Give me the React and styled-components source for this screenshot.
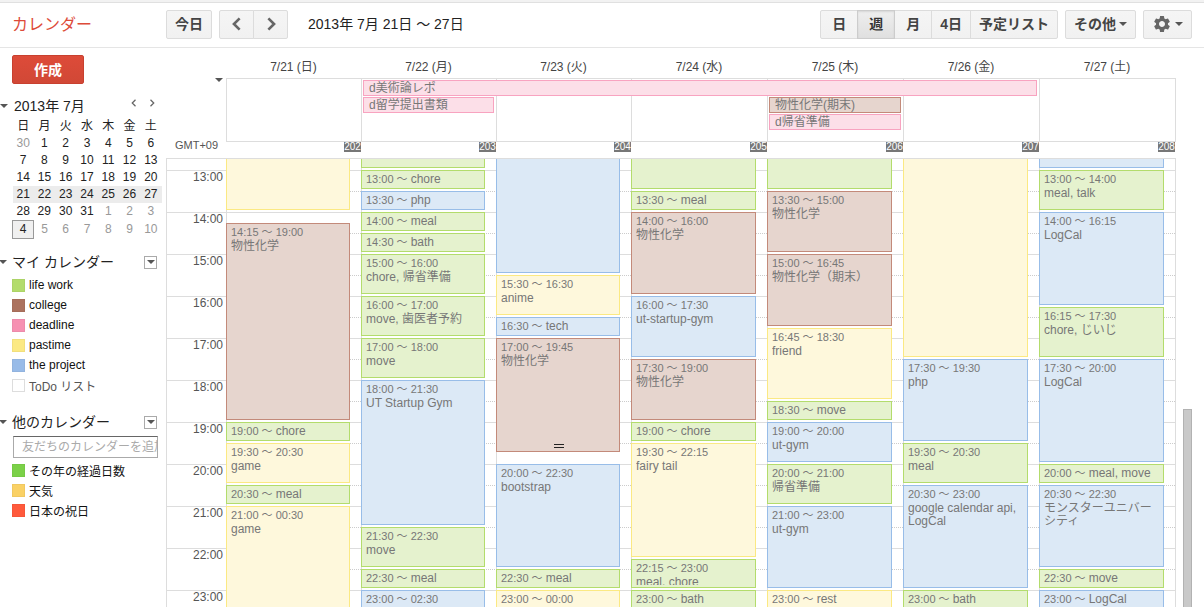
import React from "react";
import styled, { createGlobalStyle, css } from "styled-components";
import { MdSettings } from "react-icons/md";

const GlobalStyle = createGlobalStyle`
  *, *::before, *::after { box-sizing: border-box; }
  body {
    margin: 0;
    background: #fff;
    color: #222;
    font-family: "Liberation Sans", "Noto Sans CJK JP", sans-serif;
    font-size: 12px;
  }
  button, input { font-family: inherit; }
`;

const DAY_COLUMNS = "repeat(3, minmax(0, 135fr)) repeat(4, minmax(0, 136fr))";
const FIRST_HOUR = 12.75;
const HOURS = [13, 14, 15, 16, 17, 18, 19, 20, 21, 22, 23];

const palette = {
  green: { border: "#b3dc6c", fill: "#e5f2ce" },
  blue: { border: "#98bde8", fill: "#dce9f6" },
  yellow: { border: "#fbe983", fill: "#fef8dc" },
  brown: { border: "#c38a7a", fill: "#e6d5ce" },
  pink: { border: "#f8a3c0", fill: "#fcdfe8" },
};

const Page = styled.div`
  display: flex;
  flex-direction: column;
  height: 100vh;
  overflow: hidden;
`;

const TopStrip = styled.div`
  flex: none;
  height: 3px;
  background: #f2f2f2;
  border-bottom: 1px solid #e0e0e0;
`;

const Header = styled.header`
  flex: none;
  display: flex;
  align-items: center;
  height: 45px;
  padding: 0 12px 2px 0;
  border-bottom: 1px solid #e5e5e5;
`;

const Logo = styled.h1`
  width: 166px;
  margin: 0;
  padding: 2px 0 0 12px;
  color: #dd4b39;
  font-size: 16px;
  font-weight: 400;
  line-height: 24px;
`;

const ButtonGroup = styled.div`
  display: flex;
  margin-left: ${(p) => (p.$spaced ? "7px" : "0")};
`;

const HeaderRight = styled.div`
  display: flex;
  gap: 7px;
  margin-left: auto;
`;

const Button = styled.button`
  display: flex;
  align-items: center;
  justify-content: center;
  gap: 3px;
  height: 29px;
  min-width: ${(p) => (p.$narrow ? "35px" : "38px")};
  padding: 0 8px;
  border: 1px solid #dcdcdc;
  border-radius: 2px;
  background: linear-gradient(#f5f5f5, #f1f1f1);
  color: #444;
  font-size: 14px;
  font-weight: 700;
  line-height: 20px;
  white-space: nowrap;
  ${ButtonGroup} > &:not(:first-child) {
    margin-left: -1px;
    border-top-left-radius: 0;
    border-bottom-left-radius: 0;
  }
  ${ButtonGroup} > &:not(:last-child) {
    border-top-right-radius: 0;
    border-bottom-right-radius: 0;
  }
  ${(p) =>
    p.$selected &&
    css`
      z-index: 1;
      border-color: #ccc;
      background: linear-gradient(#eee, #e0e0e0);
      box-shadow: inset 0 1px 2px rgba(0, 0, 0, 0.1);
      color: #333;
    `}
`;

const DateRange = styled.h2`
  margin: 0 0 0 20px;
  font-size: 14px;
  font-weight: 400;
  line-height: 20px;
`;

const Caret = styled.span`
  flex: none;
  width: 0;
  height: 0;
  border: 4px solid transparent;
  border-top-color: #555;
  border-bottom: 0;
`;

const Content = styled.div`
  flex: 1;
  display: flex;
  min-height: 0;
`;

const Sidebar = styled.aside`
  flex: none;
  width: 166px;
  padding: 7px 4px 0 0;
`;

const CreateButton = styled.button`
  display: block;
  width: 72px;
  height: 29px;
  margin: 0 0 9px 12px;
  padding: 0;
  border: 1px solid #c8402f;
  border-radius: 2px;
  background: linear-gradient(#dd4b39, #d14836);
  color: #fff;
  font-size: 14px;
  font-weight: 700;
  line-height: 20px;
`;

const SectionHeader = styled.div`
  display: flex;
  align-items: center;
  height: ${(p) => (p.$month ? "25px" : "22px")};
  padding-right: ${(p) => (p.$month ? "1px" : "5px")};
`;

const Toggle = styled.button`
  display: flex;
  align-items: center;
  gap: ${(p) => (p.$month ? "6px" : "5px")};
  margin-left: ${(p) => (p.$month ? "0" : "-1px")};
  padding: 0;
  border: 0;
  background: none;
  color: #222;
  font-size: 14px;
  line-height: 20px;
`;

const MonthNav = styled.div`
  display: flex;
  margin-left: auto;
  padding-bottom: 5px;
`;

const IconButton = styled.button`
  display: flex;
  align-items: center;
  justify-content: center;
  width: 18px;
  height: 18px;
  padding: 0;
  border: 0;
  background: none;
`;

const MiniCalendar = styled.table`
  width: 150px;
  margin: 0 0 12px 12px;
  border-collapse: collapse;
  table-layout: fixed;
  text-align: center;
  line-height: 17px;
  th, td { padding: 0; font-weight: 400; }
`;

const MiniWeek = styled.tr`
  background: ${(p) => (p.$current ? "#ececec" : "none")};
`;

const MiniDay = styled.td`
  color: ${(p) => (p.$muted ? "#999" : "#222")};
  ${(p) =>
    p.$today &&
    css`
      border: 1px solid #999;
      background: #f0f0f0;
    `}
`;

const MenuButton = styled.button`
  display: flex;
  align-items: center;
  justify-content: center;
  width: 13px;
  height: 13px;
  margin-left: auto;
  padding: 0;
  border: 1px solid #aaa;
  background: #fff;
`;

const CalendarList = styled.ul`
  margin: 0 0 16px 12px;
  padding: 2px 0 0;
  list-style: none;
`;

const CalendarLabel = styled.label`
  display: flex;
  align-items: center;
  gap: 4px;
  height: 20px;
  color: ${(p) => (p.$off ? "#555" : "#111")};
  white-space: nowrap;
`;

const Swatch = styled.input`
  appearance: none;
  width: 13px;
  height: 13px;
  margin: 0;
  border: 1px solid rgba(0, 0, 0, 0.04);
  background: ${(p) => p.$color};
  &:not(:checked) {
    border-color: #ddd;
    background: #fff;
  }
`;

const FriendInput = styled.input`
  display: block;
  width: 145px;
  height: 22px;
  margin: 3px 0 0 13px;
  padding: 0 0 0 8px;
  border: 1px solid #aaa;
  border-top-color: #666;
  border-radius: 0;
  font-size: 12px;
  &::placeholder { color: #aaa; opacity: 1; }
`;

const Main = styled.main`
  flex: 1;
  display: flex;
  flex-direction: column;
  min-width: 0;
  padding-right: 12px;
`;

const WeekTop = styled.div`
  flex: none;
  display: grid;
  grid-template-columns: 60px minmax(0, 1fr);
  grid-template-rows: 30px 64px 16px;
  margin-right: 16px;
`;

const DayNames = styled.div`
  grid-column: 2;
  display: grid;
  grid-template-columns: ${DAY_COLUMNS};
  padding: 11px 1px 3px 0;
  color: #444;
  line-height: 16px;
  text-align: center;
`;

const TopGutter = styled.div`
  grid-column: 1;
  grid-row: 2 / 4;
  display: flex;
  flex-direction: column;
  justify-content: space-between;
  padding: 0 3px 7px 9px;
  color: #555;
  font-size: 11px;
  line-height: 12px;
`;

const AllDayToggle = styled.button`
  display: flex;
  align-self: flex-end;
  padding: 0;
  border: 0;
  background: none;
`;

const AllDay = styled.div`
  grid-column: 2;
  grid-row: 2;
  display: grid;
  grid-template-columns: ${DAY_COLUMNS};
  grid-template-rows: repeat(3, 16px) 1fr;
  row-gap: 1px;
  padding-top: 1px;
  border: 1px solid #ddd;
  border-left: 0;
`;

const AllDayLine = styled.div`
  grid-column: ${(p) => p.$day};
  grid-row: 1 / -1;
  margin-top: -1px;
  border-left: 1px solid #ddd;
`;

const AllDayEvent = styled.div`
  grid-column: ${(p) => p.$from} / ${(p) => p.$to};
  grid-row: ${(p) => p.$row};
  margin: 0 2px;
  padding-left: 5px;
  overflow: hidden;
  border: 1px solid ${(p) => palette[p.$color].border};
  background: ${(p) => palette[p.$color].fill};
  color: #777;
  line-height: 14px;
  white-space: nowrap;
`;

const DayNumbers = styled.div`
  grid-column: 2;
  grid-row: 3;
  display: grid;
  grid-template-columns: ${DAY_COLUMNS};
  justify-items: end;
  align-items: start;
  padding-right: 1px;
`;

const DayNumber = styled.span`
  width: 17px;
  background: #777;
  color: #fff;
  font-size: 10px;
  line-height: 10px;
  text-align: center;
`;

const WeekBody = styled.div`
  flex: 1;
  display: flex;
  gap: 7px;
  min-height: 0;
  overflow: hidden;
`;

const TimeGrid = styled.div`
  flex: 1;
  display: grid;
  grid-template-columns: 59px ${DAY_COLUMNS};
  grid-template-rows: 11px repeat(22, 11px 10px);
  height: max-content;
  min-width: 0;
  border: 1px solid #ddd;
`;

const Hour = styled.div`
  grid-column: 1 / -1;
  grid-row: ${(p) => p.$row} / span 4;
  border-top: 1px solid #ddd;
`;

const HourLabel = styled.div`
  width: 59px;
  padding: 0 3px 0 0;
  color: #555;
  line-height: 13px;
  text-align: right;
`;

const HalfHour = styled.div`
  grid-column: 2 / -1;
  grid-row: ${(p) => p.$row};
  border-top: 1px dotted #ccc;
`;

const DayLine = styled.div`
  grid-column: ${(p) => p.$day + 1};
  grid-row: 1 / -1;
  border-left: 1px solid #ddd;
`;

const EventBox = styled.article`
  grid-column: ${(p) => p.$day + 1};
  grid-row: ${(p) => p.$start} / ${(p) => p.$end};
  position: relative;
  min-width: 0;
  margin: 0 11px 2px 0;
  padding: 2px 4px;
  border: 1px solid ${(p) => palette[p.$color].border};
  border-top-width: ${(p) => (p.$continued ? "0" : "1px")};
  background: ${(p) => palette[p.$color].fill};
  color: #777;
  line-height: 13px;
`;

const EventText = styled.div`
  height: 100%;
  overflow: hidden;
  white-space: ${(p) => (p.$single ? "nowrap" : "normal")};
`;

const EventTime = styled.time`
  display: ${(p) => (p.$single ? "inline" : "block")};
  padding-bottom: 1px;
  font-size: 11px;
  white-space: nowrap;
`;

const ResizeHandle = styled.span`
  position: absolute;
  bottom: 3px;
  left: 50%;
  width: 10px;
  height: 4px;
  margin-left: -4px;
  border: solid #222;
  border-width: 1px 0;
`;

const Scrollbar = styled.div`
  flex: none;
  display: flex;
  flex-direction: column;
  width: 9px;
`;

const ScrollSpace = styled.div`
  flex: 252;
`;

const ScrollThumb = styled.div`
  flex: 197;
  border: 1px solid #b2b2b2;
  border-bottom: 0;
  background: #c9c9c9;
`;

const Chevron = ({ right, size, color, weight }) => (
  <svg width={size} height={size} viewBox="0 0 16 16" fill="none" stroke={color} strokeWidth={weight} aria-hidden="true">
    <path d={right ? "M5 1.5 11.5 8 5 14.5" : "M11 1.5 4.5 8 11 14.5"} />
  </svg>
);

const days = ["7/21 (日)", "7/22 (月)", "7/23 (火)", "7/24 (水)", "7/25 (木)", "7/26 (金)", "7/27 (土)"];
const dayNumbers = [202, 203, 204, 205, 206, 207, 208];

const allDayEvents = [
  { from: 2, to: 7, row: 1, color: "pink", title: "d美術論レポ" },
  { from: 2, to: 3, row: 2, color: "pink", title: "d留学提出書類" },
  { from: 5, to: 6, row: 2, color: "brown", title: "物性化学(期末)" },
  { from: 5, to: 6, row: 3, color: "pink", title: "d帰省準備" },
];

// [day, start, end, colour, title, end label when it runs past midnight]
const events = [
  [1, 12.75, 14, "yellow", ""],
  [1, 14.25, 19, "brown", "物性化学"],
  [1, 19, 19.5, "green", "chore"],
  [1, 19.5, 20.5, "yellow", "game"],
  [1, 20.5, 21, "green", "meal"],
  [1, 21, 24, "yellow", "game", "00:30"],
  [2, 12.75, 13, "green", ""],
  [2, 13, 13.5, "green", "chore"],
  [2, 13.5, 14, "blue", "php"],
  [2, 14, 14.5, "green", "meal"],
  [2, 14.5, 15, "green", "bath"],
  [2, 15, 16, "green", "chore, 帰省準備"],
  [2, 16, 17, "green", "move, 歯医者予約"],
  [2, 17, 18, "green", "move"],
  [2, 18, 21.5, "blue", "UT Startup Gym"],
  [2, 21.5, 22.5, "green", "move"],
  [2, 22.5, 23, "green", "meal"],
  [2, 23, 24, "blue", "", "02:30"],
  [3, 12.75, 15.5, "blue", ""],
  [3, 15.5, 16.5, "yellow", "anime"],
  [3, 16.5, 17, "blue", "tech"],
  [3, 17, 19.75, "brown", "物性化学"],
  [3, 20, 22.5, "blue", "bootstrap"],
  [3, 22.5, 23, "green", "meal"],
  [3, 23, 24, "yellow", "", "00:00"],
  [4, 12.75, 13.5, "green", ""],
  [4, 13.5, 14, "green", "meal"],
  [4, 14, 16, "brown", "物性化学"],
  [4, 16, 17.5, "blue", "ut-startup-gym"],
  [4, 17.5, 19, "brown", "物性化学"],
  [4, 19, 19.5, "green", "chore"],
  [4, 19.5, 22.25, "yellow", "fairy tail"],
  [4, 22.25, 23, "green", "meal, chore"],
  [4, 23, 23.5, "green", "bath"],
  [5, 12.75, 13.5, "green", ""],
  [5, 13.5, 15, "brown", "物性化学"],
  [5, 15, 16.75, "brown", "物性化学（期末）"],
  [5, 16.75, 18.5, "yellow", "friend"],
  [5, 18.5, 19, "green", "move"],
  [5, 19, 20, "blue", "ut-gym"],
  [5, 20, 21, "green", "帰省準備"],
  [5, 21, 23, "blue", "ut-gym"],
  [5, 23, 23.5, "yellow", "rest"],
  [6, 12.75, 17.5, "yellow", ""],
  [6, 17.5, 19.5, "blue", "php"],
  [6, 19.5, 20.5, "green", "meal"],
  [6, 20.5, 23, "blue", "google calendar api, LogCal"],
  [6, 23, 23.5, "green", "bath"],
  [7, 12.75, 13, "blue", ""],
  [7, 13, 14, "green", "meal, talk"],
  [7, 14, 16.25, "blue", "LogCal"],
  [7, 16.25, 17.5, "green", "chore, じいじ"],
  [7, 17.5, 20, "blue", "LogCal"],
  [7, 20, 20.5, "green", "meal, move"],
  [7, 20.5, 22.5, "blue", "モンスターユニバーシティ"],
  [7, 22.5, 23, "green", "move"],
  [7, 23, 23.5, "blue", "LogCal"],
];

const miniWeeks = [
  [30, 1, 2, 3, 4, 5, 6],
  [7, 8, 9, 10, 11, 12, 13],
  [14, 15, 16, 17, 18, 19, 20],
  [21, 22, 23, 24, 25, 26, 27],
  [28, 29, 30, 31, 1, 2, 3],
  [4, 5, 6, 7, 8, 9, 10],
];

const myCalendars = [
  ["life work", "#b3dc6c"],
  ["college", "#ac725e"],
  ["deadline", "#f691b2"],
  ["pastime", "#fbe983"],
  ["the project", "#98bbe8"],
  ["ToDo リスト", null],
];

const otherCalendars = [
  ["その年の経過日数", "#7bd148"],
  ["天気", "#fad165"],
  ["日本の祝日", "#ff5a3c"],
];

const rowOf = (t) => (t - FIRST_HOUR) * 4 + 1;
const clock = (t) => `${Math.floor(t)}:${String((t % 1) * 60).padStart(2, "0")}`;
const isMuted = (week, n) => (week === 0 && n > 20) || (week === 4 && n < 10) || (week === 5 && n !== 4);

function Event({ data: [day, start, end, color, title, endLabel] }) {
  const continued = start === FIRST_HOUR;
  const single = end - start <= 0.5;
  return (
    <EventBox $day={day} $start={rowOf(start)} $end={rowOf(end)} $color={color} $continued={continued}>
      {!continued && (
        <EventText $single={single}>
          <EventTime $single={single}>
            {clock(start)} 〜 {!single && (endLabel || clock(end))}
          </EventTime>
          {title}
        </EventText>
      )}
      {day === 3 && start === 17 && <ResizeHandle />}
    </EventBox>
  );
}

function Calendars({ items }) {
  return (
    <CalendarList>
      {items.map(([name, color]) => (
        <li key={name}>
          <CalendarLabel $off={!color}>
            <Swatch type="checkbox" defaultChecked={!!color} $color={color} />
            {name}
          </CalendarLabel>
        </li>
      ))}
    </CalendarList>
  );
}

export default function App() {
  return (
    <Page>
      <GlobalStyle />
      <TopStrip />
      <Header>
        <Logo>カレンダー</Logo>
        <Button>今日</Button>
        <ButtonGroup $spaced>
          <Button $narrow aria-label="前の週"><Chevron size={14} color="#666" weight={3} /></Button>
          <Button $narrow aria-label="次の週"><Chevron right size={14} color="#666" weight={3} /></Button>
        </ButtonGroup>
        <DateRange>2013年 7月 21日 〜 27日</DateRange>
        <HeaderRight>
          <ButtonGroup>
            <Button>日</Button>
            <Button $selected>週</Button>
            <Button>月</Button>
            <Button>4日</Button>
            <Button>予定リスト</Button>
          </ButtonGroup>
          <Button>その他<Caret /></Button>
          <Button aria-label="設定"><MdSettings size={20} color="#666" /><Caret /></Button>
        </HeaderRight>
      </Header>
      <Content>
        <Sidebar>
          <CreateButton>作成</CreateButton>
          <SectionHeader $month>
            <Toggle $month><Caret />2013年 7月</Toggle>
            <MonthNav>
              <IconButton aria-label="前の月"><Chevron size={8} color="#666" weight={2.5} /></IconButton>
              <IconButton aria-label="次の月"><Chevron right size={8} color="#666" weight={2.5} /></IconButton>
            </MonthNav>
          </SectionHeader>
          <MiniCalendar>
            <thead>
              <tr>{["日", "月", "火", "水", "木", "金", "土"].map((d) => <th key={d} scope="col">{d}</th>)}</tr>
            </thead>
            <tbody>
              {miniWeeks.map((week, w) => (
                <MiniWeek key={w} $current={w === 3}>
                  {week.map((n) => (
                    <MiniDay key={n} $muted={isMuted(w, n)} $today={w === 5 && n === 4}>{n}</MiniDay>
                  ))}
                </MiniWeek>
              ))}
            </tbody>
          </MiniCalendar>
          <SectionHeader>
            <Toggle><Caret />マイ カレンダー</Toggle>
            <MenuButton aria-label="マイ カレンダーのメニュー"><Caret /></MenuButton>
          </SectionHeader>
          <Calendars items={myCalendars} />
          <SectionHeader>
            <Toggle><Caret />他のカレンダー</Toggle>
            <MenuButton aria-label="他のカレンダーのメニュー"><Caret /></MenuButton>
          </SectionHeader>
          <FriendInput aria-label="友だちのカレンダーを追加" placeholder="友だちのカレンダーを追加" />
          <Calendars items={otherCalendars} />
        </Sidebar>
        <Main>
          <WeekTop>
            <DayNames>{days.map((d) => <div key={d}>{d}</div>)}</DayNames>
            <TopGutter>
              <AllDayToggle aria-label="終日の予定"><Caret /></AllDayToggle>
              <span>GMT+09</span>
            </TopGutter>
            <AllDay>
              {days.map((d, i) => <AllDayLine key={d} $day={i + 1} />)}
              {allDayEvents.map((e) => (
                <AllDayEvent key={e.title} $from={e.from} $to={e.to} $row={e.row} $color={e.color}>{e.title}</AllDayEvent>
              ))}
            </AllDay>
            <DayNumbers>{dayNumbers.map((n) => <DayNumber key={n}>{n}</DayNumber>)}</DayNumbers>
          </WeekTop>
          <WeekBody>
            <TimeGrid>
              {HOURS.map((h) => (
                <React.Fragment key={h}>
                  <Hour $row={rowOf(h)}><HourLabel>{h}:00</HourLabel></Hour>
                  <HalfHour $row={rowOf(h + 0.5)} />
                </React.Fragment>
              ))}
              {days.map((d, i) => <DayLine key={d} $day={i + 1} />)}
              {events.map((e) => <Event key={`${e[0]}-${e[1]}`} data={e} />)}
            </TimeGrid>
            <Scrollbar>
              <ScrollSpace />
              <ScrollThumb />
            </Scrollbar>
          </WeekBody>
        </Main>
      </Content>
    </Page>
  );
}
